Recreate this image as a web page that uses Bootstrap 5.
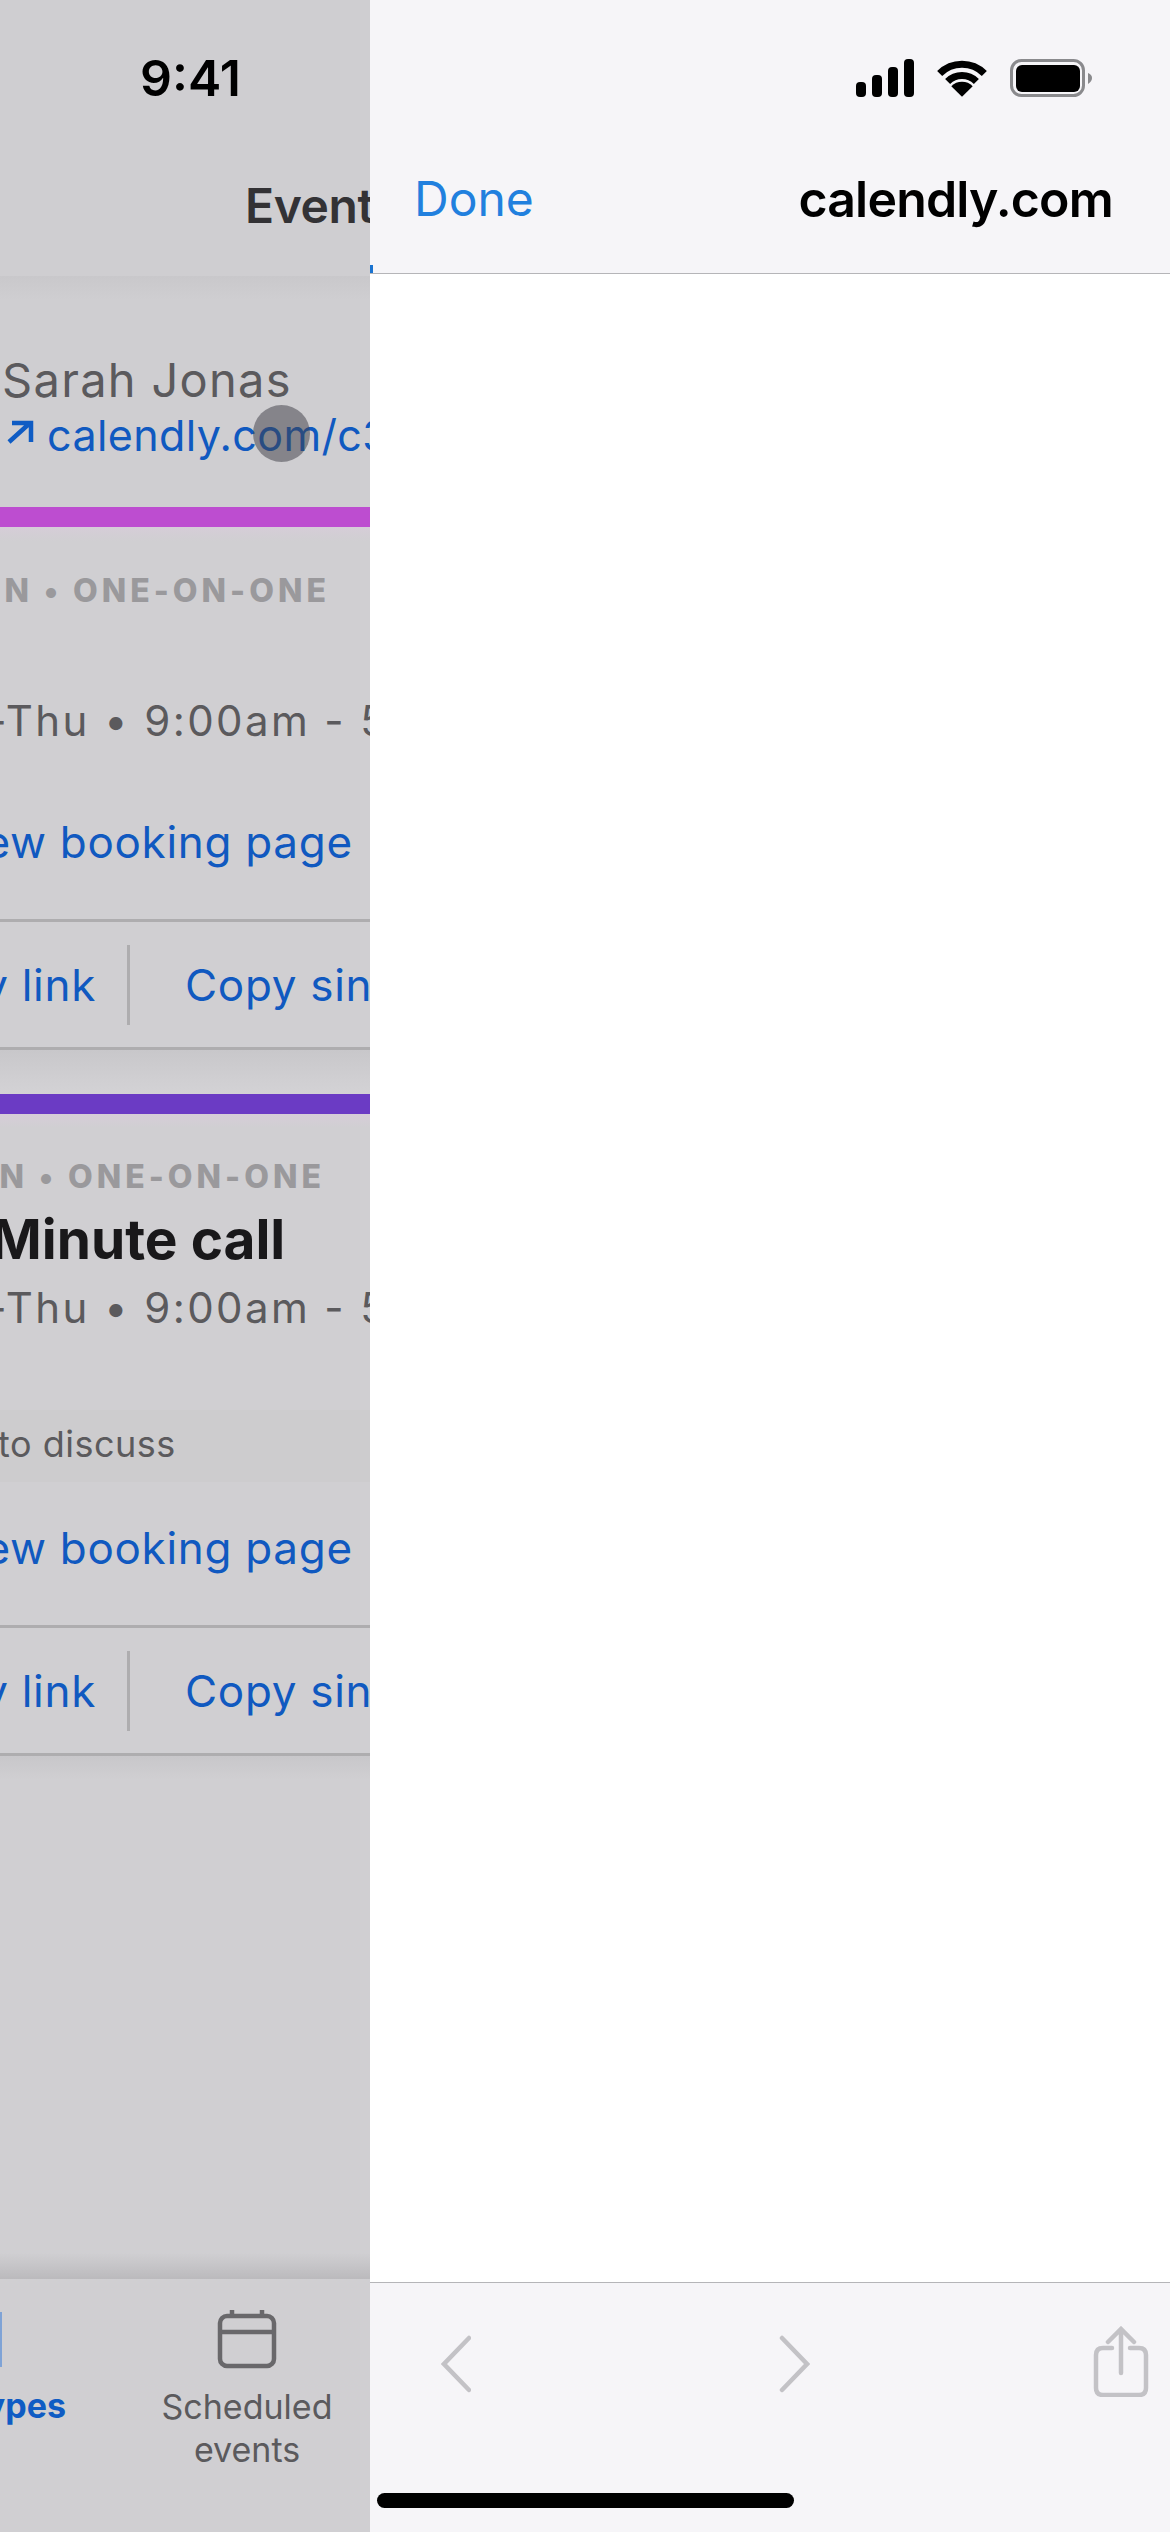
<!doctype html>
<html lang="en"><head><meta charset="utf-8"><title>Calendly</title>
<link rel="stylesheet" href="https://cdn.jsdelivr.net/npm/bootstrap@5.3.0/dist/css/bootstrap.min.css">
<style>
html,body{margin:0;height:2532px;overflow:hidden;background:#fff}
body{font-family:"Inter","Liberation Sans",sans-serif}
.phone{width:1170px;height:2532px;overflow:hidden;position:relative}
.back-pane{width:370px;flex:none;background:#d0cfd2;overflow:hidden;white-space:nowrap}
.front-pane{flex:1 1 auto;min-width:0;background:#fff}
.back-head{height:276px;background:#cfced1;padding-top:50px}
.clock{font-size:50px;font-weight:600;line-height:56px;color:#000;margin-left:140px}
.page-title{font-size:48px;font-weight:600;line-height:60px;color:#333235;margin:70px 0 0 245px;letter-spacing:-.4px;overflow:hidden}
.profile{height:231px;padding-top:76px;background:linear-gradient(#c9c8cb,#cfced1 24px,#cfced1)}
.owner{font-size:47px;line-height:56px;color:#5b5a5d;margin-left:2px;letter-spacing:1.3px}
.owner-link{font-size:43px;line-height:48px;color:#1059c0;letter-spacing:.4px;padding-top:3px}
.arrow-ne{width:28px;height:24px;margin:9px 13px 0 6px;flex:none}
.bar-pink{height:20px;background:#bd4dd0}
.bar-violet{height:20px;background:#6b3bc4}
.event-body{background:linear-gradient(#d6cdd8,#d0cfd2 14px)}
.event-a{padding-top:44px}
.event-b{padding-top:43px}
.kind{font-size:32px;font-weight:800;line-height:40px;color:#9a999c;letter-spacing:4px}
.kind-a{margin-left:-105px}
.kind-b{margin-left:-110px}
.title-gap{height:85px}
.ev-title{font-size:55px;font-weight:700;line-height:60px;color:#19181a;margin:12px 0 14px -95px}
.hours{font-size:42px;line-height:50px;color:#5b5a5d;letter-spacing:2.4px;margin-left:-108px}
.note{height:72px;margin-top:77px;background:#cdccce;font-size:36px;color:#5b5a5d;line-height:68px;letter-spacing:.5px}
.note-text{margin-left:-99px;display:inline-block}
.view{font-size:44px;line-height:50px;color:#1059c0;letter-spacing:.7px;margin-left:-58px}
.view-a{margin-top:71px}
.view-b{margin-top:41px}
.acts{height:131px;border-top:3px solid #aeadaf;border-bottom:3px solid #aeadaf;font-size:44px;letter-spacing:.7px;color:#1059c0}
.acts-a{margin-top:52px}
.acts-b{margin-top:52px}
.acts-left{width:127px;flex:none;padding-right:31px;overflow:hidden}
.acts-sep{width:3px;height:80px;background:#aeadaf;flex:none}
.acts-right{padding-left:55px}
.event-gap{height:44px;background:linear-gradient(#c8c7ca,#d0cfd2 30px,#d3d2d5)}
.filler{height:523px;background:linear-gradient(#c8c7ca,#d0cfd2 24px,#d0cfd2 calc(100% - 26px),#bbbabd)}
.tabs{height:253px;background:#d0cfd2;padding-top:31px;font-size:34px;line-height:43px;text-align:center}
.tab-active{width:97px;flex:none;color:#0f5cc4;font-weight:700}
.tab-sliver{width:2px;height:55px;background:#7fa3d6;margin:2px 95px 17px 0}
.tab-active-label{padding-right:31px}
.tab-plain{width:300px;flex:none;color:#5b5a5d}
.cal{width:62px;height:62px;margin-bottom:13px}
.front-head{height:274px;background:#f6f5f8;border-bottom:1px solid #b5b5b8}
.status{padding:59px 77px 0 0;height:97px;gap:22px}
.nav-row{height:60px;margin-top:72px;padding:0 57px 0 44px;font-size:48px;line-height:60px}
.done{color:#2180de}
.site{color:#000;font-weight:600;font-size:50px;letter-spacing:-.8px}
.sheet{flex:1 1 auto;background:#fff}
.front-foot{height:250px;background:#f6f5f8;border-top:1px solid #b5b5b8;padding-top:43px}
.tools{height:71px;padding-left:71px}
.tool-fwd{margin-left:308px}
.tool-share{margin-left:283px}
.home{width:417px;height:15px;border-radius:8px;background:#000;margin:96px 0 0 7px}
.blip{position:absolute;left:253px;top:405px;width:57px;height:57px;border-radius:50%;background:rgba(66,66,72,.52)}
.tab-edge{position:absolute;left:370px;top:265px;width:3px;height:8px;background:#1a73d0}
</style></head><body>
<div class="phone d-flex">
  <div class="back-pane d-flex flex-column">
    <div class="back-head">
      <div class="clock">9:41</div>
      <div class="page-title">Event types</div>
    </div>
    <div class="profile">
      <div class="owner">Sarah Jonas</div>
      <div class="owner-link d-flex align-items-start">
        <svg class="arrow-ne" viewBox="0 0 28 24" fill="none" stroke="#0f5cc4" stroke-width="4.5"><path d="M3 22 L24 3 M6 3 H25 V22"/></svg>
        <span>calendly.com/c3</span>
      </div>
    </div>
    <div class="bar-pink"></div>
    <div class="event-body event-a">
      <div class="kind kind-a">30 MIN • ONE-ON-ONE</div>
      <div class="title-gap"></div>
      <div class="hours">Mon-Thu • 9:00am - 5:00pm</div>
      <div class="view view-a">View booking page</div>
      <div class="acts acts-a d-flex align-items-center">
        <div class="acts-left d-flex justify-content-end"><span class="flex-shrink-0">Copy link</span></div>
        <div class="acts-sep"></div>
        <div class="acts-right">Copy single-use link</div>
      </div>
    </div>
    <div class="event-gap"></div>
    <div class="bar-violet"></div>
    <div class="event-body event-b">
      <div class="kind kind-b">30 MIN • ONE-ON-ONE</div>
      <div class="ev-title">30 Minute call</div>
      <div class="hours">Mon-Thu • 9:00am - 5:00pm</div>
      <div class="note"><span class="note-text">Time to discuss</span></div>
      <div class="view view-b">View booking page</div>
      <div class="acts acts-b d-flex align-items-center">
        <div class="acts-left d-flex justify-content-end"><span class="flex-shrink-0">Copy link</span></div>
        <div class="acts-sep"></div>
        <div class="acts-right">Copy single-use link</div>
      </div>
    </div>
    <div class="filler"></div>
    <div class="tabs d-flex">
      <div class="tab-active d-flex flex-column align-items-end">
        <div class="tab-sliver"></div>
        <div class="tab-active-label">Event types</div>
      </div>
      <div class="tab-plain d-flex flex-column align-items-center">
        <svg class="cal" viewBox="0 0 62 62" fill="none" stroke="#69686b" stroke-width="4.5"><rect x="4" y="6" width="54" height="50" rx="7"/><path d="M4 22H58M16 0V7M46 0V7"/></svg>
        <div>Scheduled<br>events</div>
      </div>
    </div>
  </div>
  <div class="front-pane d-flex flex-column">
    <div class="front-head">
      <div class="status d-flex justify-content-end align-items-start">
        <svg width="58" height="38" viewBox="0 0 58 38" fill="#000"><rect x="0" y="23" width="10" height="15" rx="4"/><rect x="16" y="16" width="10" height="22" rx="4"/><rect x="32" y="8" width="10" height="30" rx="4"/><rect x="48" y="0" width="10" height="38" rx="4"/></svg>
        <svg width="52" height="38" viewBox="0 0 51 37"><path d="M3.6 14.1A31 31 0 0 1 47.4 14.1M11.4 21.9A20 20 0 0 1 39.6 21.9" fill="none" stroke="#000" stroke-width="7"/><path d="M25.5 37L15 26.5A15 15 0 0 1 36 26.5Z" fill="#000"/></svg>
        <svg width="83" height="38" viewBox="0 0 83 38"><rect x="1.5" y="1.5" width="72" height="35" rx="10" fill="none" stroke="#8a8a8d" stroke-width="3"/><rect x="6" y="6" width="64" height="27" rx="6" fill="#000"/><path d="M78 14C81 15 82 17 82 19S81 23 78 25Z" fill="#8a8a8d"/></svg>
      </div>
      <div class="nav-row d-flex justify-content-between align-items-center">
        <span class="done">Done</span><span class="site">calendly.com</span>
      </div>
    </div>
    <div class="sheet"></div>
    <div class="front-foot">
      <div class="tools d-flex align-items-start">
        <svg width="30" height="71" viewBox="0 0 30 71" fill="none" stroke="#c3c2c6" stroke-width="4.5" stroke-linecap="round"><path d="M28 12L3 38L28 64"/></svg>
        <svg class="tool-fwd" width="31" height="71" viewBox="0 0 31 71" fill="none" stroke="#c3c2c6" stroke-width="4.5" stroke-linecap="round"><path d="M3 12L28 38L3 64"/></svg>
        <svg class="tool-share" width="56" height="71" viewBox="0 0 56 71" fill="none" stroke="#c3c2c6" stroke-width="4.5" stroke-linecap="round"><path d="M19 22H10Q3 22 3 29V62Q3 69 10 69H46Q53 69 53 62V29Q53 22 46 22H37"/><path d="M28 47V3M15 16L28 3L41 16"/></svg>
      </div>
      <div class="home"></div>
    </div>
  </div>
  <div class="blip"></div>
  <div class="tab-edge"></div>
</div>
<script src="https://cdn.jsdelivr.net/npm/bootstrap@5.3.0/dist/js/bootstrap.bundle.min.js"></script>
</body></html>
